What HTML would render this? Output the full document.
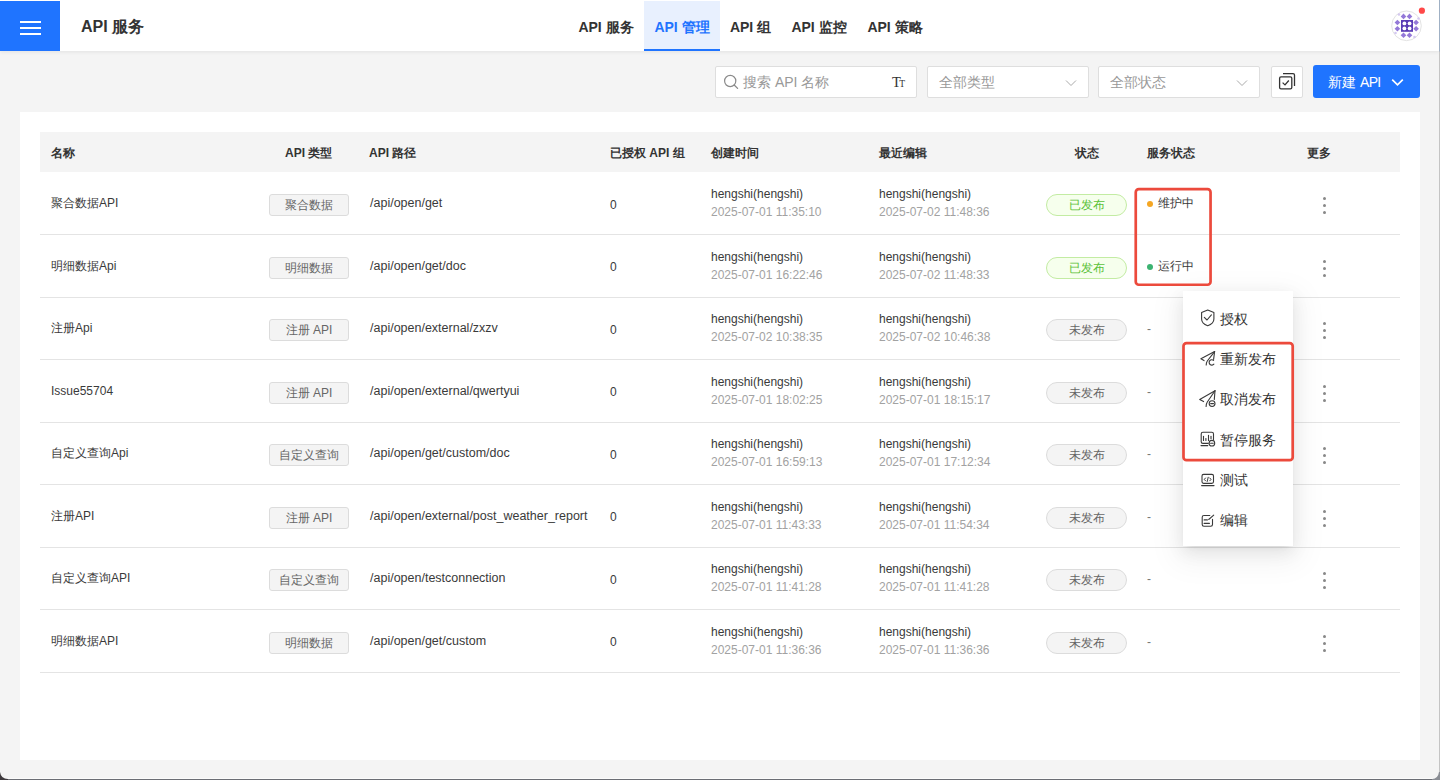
<!DOCTYPE html>
<html><head><meta charset="utf-8">
<style>
*{margin:0;padding:0;box-sizing:border-box;}
html,body{width:1440px;height:780px;overflow:hidden;}
body{position:relative;background:#f4f4f4;font-family:"Liberation Sans",sans-serif;color:#333;}
.abs{position:absolute;}
#hdr{position:absolute;left:0;top:0;width:1439px;height:51px;background:#fff;box-shadow:0 1px 4px rgba(0,0,0,0.08);}
#burger{position:absolute;left:0;top:1px;width:60px;height:50px;background:#1f74ff;}
#burger i{position:absolute;left:20px;width:21px;height:2px;background:#fff;}
#title{position:absolute;left:81px;top:17px;font-size:16px;font-weight:bold;line-height:20px;color:#333;white-space:nowrap;}
.tab{position:absolute;top:1px;height:50px;line-height:52px;font-size:14px;font-weight:bold;color:#333;white-space:nowrap;text-align:center;}
.tab.act{background:#e8f0fe;color:#1f74ff;border-bottom:2px solid #1f74ff;line-height:52px;}
.box{position:absolute;top:66px;height:32px;background:#fff;border:1px solid #dedede;border-radius:2px;}
.ph{position:absolute;font-size:14px;color:#999;white-space:nowrap;line-height:16px;}
#card{position:absolute;left:20px;top:112px;width:1400px;height:648px;background:#fff;}
#thead{position:absolute;left:40px;top:132px;width:1360px;height:40px;background:#f4f4f4;}
.th{position:absolute;top:146px;font-size:12px;font-weight:bold;line-height:14px;color:#333;white-space:nowrap;}
.row{position:absolute;left:40px;width:1360px;height:62px;}
.ln{position:absolute;left:40px;width:1360px;height:1px;background:#e4e4e4;}
.t{position:absolute;font-size:12px;line-height:14px;white-space:nowrap;color:#3a3a3a;}
.g{color:#a2a2a2;}
.tag{position:absolute;left:229px;width:80px;height:22px;top:22px;background:#f4f4f4;border:1px solid #dcdcdc;border-radius:3px;font-size:12px;line-height:20px;text-align:center;color:#666;}
.pill{position:absolute;left:1006px;width:81px;height:22px;top:22px;border-radius:11px;font-size:12px;line-height:20px;text-align:center;}
.pub{background:#f6ffed;border:1px solid #c3eca3;color:#5cc23a;}
.unpub{background:#f4f4f4;border:1px solid #dcdcdc;color:#666;}
.more{position:absolute;left:1283px;top:25px;width:3px;height:15px;}
.more i{position:absolute;left:0;width:3px;height:3px;border-radius:50%;background:#888;}
.dot{position:absolute;width:6px;height:6px;border-radius:50%;}
.redbox{position:absolute;border:3px solid #ef4739;border-radius:4px;}
#menu{position:absolute;left:1183px;top:291px;width:110px;height:255px;background:#fff;box-shadow:0 3px 6px -4px rgba(0,0,0,.12),0 6px 16px 0 rgba(0,0,0,.08),0 9px 28px 8px rgba(0,0,0,.05);}
.mi{position:absolute;left:17px;height:20px;font-size:14px;line-height:20px;color:#333;white-space:nowrap;}
.mi svg{position:absolute;left:0;top:2px;}
.mi span{position:absolute;left:20px;top:0;}
</style></head>
<body>
<div id="hdr">
  <div id="burger"><i style="top:20px"></i><i style="top:26px"></i><i style="top:32px"></i></div>
  <div id="title">API 服务</div>
  <div class="tab" style="left:568px;width:76px;">API 服务</div>
  <div class="tab act" style="left:644px;width:76px;">API 管理</div>
  <div class="tab" style="left:720px;width:61px;">API 组</div>
  <div class="tab" style="left:781px;width:76px;">API 监控</div>
  <div class="tab" style="left:857px;width:76px;">API 策略</div>
</div>

<svg class="abs" style="left:1385px;top:0px" width="45" height="48" viewBox="1385 0 45 48">
  <circle cx="1406.5" cy="25.8" r="14.8" fill="#fff" stroke="#e3e3e3" stroke-width="1"/>
  <g fill="#9479d8">
    <path d="M1403.5 13.6 l2.8 2.8 -2.8 2.8 -2.8 -2.8z"/><path d="M1409.5 13.6 l2.8 2.8 -2.8 2.8 -2.8 -2.8z"/>
    <path d="M1397.4 19.7 l2.8 2.8 -2.8 2.8 -2.8 -2.8z"/><path d="M1397.4 26 l2.8 2.8 -2.8 2.8 -2.8 -2.8z"/>
    <path d="M1416.1 19.7 l2.8 2.8 -2.8 2.8 -2.8 -2.8z"/><path d="M1416.1 26 l2.8 2.8 -2.8 2.8 -2.8 -2.8z"/>
    <path d="M1403.5 32.4 l2.8 2.8 -2.8 2.8 -2.8 -2.8z"/><path d="M1409.5 32.4 l2.8 2.8 -2.8 2.8 -2.8 -2.8z"/>
  </g>
  <g fill="#d4c8f0"><circle cx="1399" cy="14.5" r="1.3"/><circle cx="1418.5" cy="18.5" r="1.3"/><circle cx="1395.5" cy="33" r="1.3"/><circle cx="1414.5" cy="37" r="1.3"/></g>
  <rect x="1401" y="20" width="12" height="11.8" fill="#5b3db5"/>
  <g fill="#fff"><circle cx="1404.4" cy="23.4" r="1.9"/><circle cx="1409.6" cy="23.4" r="1.9"/><circle cx="1404.4" cy="28.4" r="1.9"/><circle cx="1409.6" cy="28.4" r="1.9"/></g>
  <circle cx="1407" cy="25.9" r="1.2" fill="#5b3db5"/>
  <circle cx="1421.9" cy="10.7" r="3.1" fill="#ff4848"/>
</svg>

<div class="box" style="left:715px;width:202px;">
  <svg class="abs" style="left:7px;top:7px" width="16" height="16" viewBox="0 0 16 16"><circle cx="7.2" cy="7" r="5.6" fill="none" stroke="#8a8a8a" stroke-width="1.2"/><line x1="11.2" y1="11" x2="14.6" y2="14.4" stroke="#8a8a8a" stroke-width="1.3" stroke-linecap="round"/></svg>
  <div class="ph" style="left:27px;top:7px;">搜索 API 名称</div>
  <div class="abs" style="left:176px;top:6px;font-family:'Liberation Serif',serif;color:#333;white-space:nowrap;"><span style="font-size:14.5px;">T</span><span style="font-size:9.5px;margin-left:-1.5px;">T</span></div>
</div>
<div class="box" style="left:927px;width:162px;">
  <div class="ph" style="left:11px;top:7px;">全部类型</div>
  <svg class="abs" style="left:137px;top:12px" width="12" height="8" viewBox="0 0 12 8"><polyline points="1,1.5 6,6.5 11,1.5" fill="none" stroke="#aaa" stroke-width="1"/></svg>
</div>
<div class="box" style="left:1098px;width:162px;">
  <div class="ph" style="left:11px;top:7px;">全部状态</div>
  <svg class="abs" style="left:137px;top:12px" width="12" height="8" viewBox="0 0 12 8"><polyline points="1,1.5 6,6.5 11,1.5" fill="none" stroke="#aaa" stroke-width="1"/></svg>
</div>
<div class="box" style="left:1271px;width:32px;">
  <svg class="abs" style="left:-1px;top:-1px" width="32" height="32" viewBox="1271 66 32 32" fill="none" stroke="#333" stroke-width="1.3"><path d="M1283 73.6 H1293 Q1294.5 73.6 1294.5 75.1 V86"/><rect x="1279.6" y="76.9" width="12.2" height="11.9" rx="1.4"/><polyline points="1282.6,82.6 1285,84.9 1288.8,80.5"/></svg>
</div>
<div class="abs" style="left:1313px;top:65px;width:107px;height:33px;background:#1f74ff;border-radius:3px;">
  <div class="abs" style="left:15px;top:9px;font-size:14px;line-height:16px;color:#fff;white-space:nowrap;">新建 <span style="letter-spacing:-0.6px">API</span></div>
  <svg class="abs" style="left:78px;top:13px" width="13" height="9" viewBox="0 0 13 9"><polyline points="1.2,1.6 6.5,6.8 11.8,1.6" fill="none" stroke="#fff" stroke-width="1.7"/></svg>
</div>
<div id="card"></div>
<div id="thead"></div>
<div class="th" style="left:51px;">名称</div>
<div class="th" style="left:285px;">API 类型</div>
<div class="th" style="left:369px;">API 路径</div>
<div class="th" style="left:610px;">已授权 API 组</div>
<div class="th" style="left:711px;">创建时间</div>
<div class="th" style="left:879px;">最近编辑</div>
<div class="th" style="left:1075px;">状态</div>
<div class="th" style="left:1147px;">服务状态</div>
<div class="th" style="left:1307px;">更多</div>
<div class="row" style="top:172.0px;"><div class="t" style="left:11px;top:24px;">聚合数据API</div><div class="tag">聚合数据</div><div class="t" style="left:330px;top:24px;font-size:12.5px;">/api/open/get</div><div class="t" style="left:570px;top:25.5px;">0</div><div class="t" style="left:671px;top:15px;">hengshi(hengshi)</div><div class="t g" style="left:671px;top:33px;">2025-07-01 11:35:10</div><div class="t" style="left:839px;top:15px;">hengshi(hengshi)</div><div class="t g" style="left:839px;top:33px;">2025-07-02 11:48:36</div><div class="pill pub">已发布</div><div class="dot" style="left:1107px;top:29px;background:#f5a623;"></div><div class="t" style="left:1118px;top:24px;">维护中</div><div class="more"><i style="top:0"></i><i style="top:7px"></i><i style="top:14px"></i></div></div>
<div class="row" style="top:234.5px;"><div class="t" style="left:11px;top:24px;">明细数据Api</div><div class="tag">明细数据</div><div class="t" style="left:330px;top:24px;font-size:12.5px;">/api/open/get/doc</div><div class="t" style="left:570px;top:25.5px;">0</div><div class="t" style="left:671px;top:15px;">hengshi(hengshi)</div><div class="t g" style="left:671px;top:33px;">2025-07-01 16:22:46</div><div class="t" style="left:839px;top:15px;">hengshi(hengshi)</div><div class="t g" style="left:839px;top:33px;">2025-07-02 11:48:33</div><div class="pill pub">已发布</div><div class="dot" style="left:1107px;top:29px;background:#3cb371;"></div><div class="t" style="left:1118px;top:24px;">运行中</div><div class="more"><i style="top:0"></i><i style="top:7px"></i><i style="top:14px"></i></div></div>
<div class="row" style="top:297.0px;"><div class="t" style="left:11px;top:24px;">注册Api</div><div class="tag">注册 API</div><div class="t" style="left:330px;top:24px;font-size:12.5px;">/api/open/external/zxzv</div><div class="t" style="left:570px;top:25.5px;">0</div><div class="t" style="left:671px;top:15px;">hengshi(hengshi)</div><div class="t g" style="left:671px;top:33px;">2025-07-02 10:38:35</div><div class="t" style="left:839px;top:15px;">hengshi(hengshi)</div><div class="t g" style="left:839px;top:33px;">2025-07-02 10:46:38</div><div class="pill unpub">未发布</div><div class="t" style="left:1107px;top:25px;color:#777;">-</div><div class="more"><i style="top:0"></i><i style="top:7px"></i><i style="top:14px"></i></div></div>
<div class="row" style="top:359.5px;"><div class="t" style="left:11px;top:24px;">Issue55704</div><div class="tag">注册 API</div><div class="t" style="left:330px;top:24px;font-size:12.5px;">/api/open/external/qwertyui</div><div class="t" style="left:570px;top:25.5px;">0</div><div class="t" style="left:671px;top:15px;">hengshi(hengshi)</div><div class="t g" style="left:671px;top:33px;">2025-07-01 18:02:25</div><div class="t" style="left:839px;top:15px;">hengshi(hengshi)</div><div class="t g" style="left:839px;top:33px;">2025-07-01 18:15:17</div><div class="pill unpub">未发布</div><div class="t" style="left:1107px;top:25px;color:#777;">-</div><div class="more"><i style="top:0"></i><i style="top:7px"></i><i style="top:14px"></i></div></div>
<div class="row" style="top:422.0px;"><div class="t" style="left:11px;top:24px;">自定义查询Api</div><div class="tag">自定义查询</div><div class="t" style="left:330px;top:24px;font-size:12.5px;">/api/open/get/custom/doc</div><div class="t" style="left:570px;top:25.5px;">0</div><div class="t" style="left:671px;top:15px;">hengshi(hengshi)</div><div class="t g" style="left:671px;top:33px;">2025-07-01 16:59:13</div><div class="t" style="left:839px;top:15px;">hengshi(hengshi)</div><div class="t g" style="left:839px;top:33px;">2025-07-01 17:12:34</div><div class="pill unpub">未发布</div><div class="t" style="left:1107px;top:25px;color:#777;">-</div><div class="more"><i style="top:0"></i><i style="top:7px"></i><i style="top:14px"></i></div></div>
<div class="row" style="top:484.5px;"><div class="t" style="left:11px;top:24px;">注册API</div><div class="tag">注册 API</div><div class="t" style="left:330px;top:24px;font-size:12.5px;">/api/open/external/post_weather_report</div><div class="t" style="left:570px;top:25.5px;">0</div><div class="t" style="left:671px;top:15px;">hengshi(hengshi)</div><div class="t g" style="left:671px;top:33px;">2025-07-01 11:43:33</div><div class="t" style="left:839px;top:15px;">hengshi(hengshi)</div><div class="t g" style="left:839px;top:33px;">2025-07-01 11:54:34</div><div class="pill unpub">未发布</div><div class="t" style="left:1107px;top:25px;color:#777;">-</div><div class="more"><i style="top:0"></i><i style="top:7px"></i><i style="top:14px"></i></div></div>
<div class="row" style="top:547.0px;"><div class="t" style="left:11px;top:24px;">自定义查询API</div><div class="tag">自定义查询</div><div class="t" style="left:330px;top:24px;font-size:12.5px;">/api/open/testconnection</div><div class="t" style="left:570px;top:25.5px;">0</div><div class="t" style="left:671px;top:15px;">hengshi(hengshi)</div><div class="t g" style="left:671px;top:33px;">2025-07-01 11:41:28</div><div class="t" style="left:839px;top:15px;">hengshi(hengshi)</div><div class="t g" style="left:839px;top:33px;">2025-07-01 11:41:28</div><div class="pill unpub">未发布</div><div class="t" style="left:1107px;top:25px;color:#777;">-</div><div class="more"><i style="top:0"></i><i style="top:7px"></i><i style="top:14px"></i></div></div>
<div class="row" style="top:609.5px;"><div class="t" style="left:11px;top:24px;">明细数据API</div><div class="tag">明细数据</div><div class="t" style="left:330px;top:24px;font-size:12.5px;">/api/open/get/custom</div><div class="t" style="left:570px;top:25.5px;">0</div><div class="t" style="left:671px;top:15px;">hengshi(hengshi)</div><div class="t g" style="left:671px;top:33px;">2025-07-01 11:36:36</div><div class="t" style="left:839px;top:15px;">hengshi(hengshi)</div><div class="t g" style="left:839px;top:33px;">2025-07-01 11:36:36</div><div class="pill unpub">未发布</div><div class="t" style="left:1107px;top:25px;color:#777;">-</div><div class="more"><i style="top:0"></i><i style="top:7px"></i><i style="top:14px"></i></div></div>

<div class="ln" style="top:234px"></div><div class="ln" style="top:297px"></div><div class="ln" style="top:359px"></div><div class="ln" style="top:422px"></div><div class="ln" style="top:484px"></div><div class="ln" style="top:547px"></div><div class="ln" style="top:609px"></div><div class="ln" style="top:672px"></div><svg class="abs" style="left:1130px;top:180px;z-index:5" width="170" height="290" viewBox="1130 180 170 290" fill="none" stroke="#ec4a3c" stroke-width="2.7"><rect x="1135.75" y="189.15" width="74.8" height="95.6" rx="3"/><rect x="1183.5" y="343.05" width="109.2" height="117.1" rx="3"/></svg>
<div id="menu">
  <div class="mi" style="top:18px;"><span>授权</span></div>
  <div class="mi" style="top:58px;"><span>重新发布</span></div>
  <div class="mi" style="top:98px;"><span>取消发布</span></div>
  <div class="mi" style="top:139px;"><span>暂停服务</span></div>
  <div class="mi" style="top:179px;"><span>测试</span></div>
  <div class="mi" style="top:219px;"><span>编辑</span></div>
</div>

<svg class="abs" style="left:1190px;top:300px" width="30" height="240" viewBox="1190 300 30 240" fill="none" stroke="#3a3a3a" stroke-width="1.1" stroke-linecap="round" stroke-linejoin="round">
  <path d="M1207.7 310 L1201.6 312.6 V319 Q1201.6 323.6 1207.7 325.7 Q1213.9 323.6 1213.9 319 V312.6 Z"/>
  <polyline points="1204.3,317.4 1207,320 1211.4,314.8"/>
  <path d="M1214.6 351.6 L1200.9 358.8 L1204 360.6"/>
  <path d="M1214.6 351.6 L1207.3 361 Q1206.2 362.6 1206.2 365"/>
  <path d="M1214.6 351.6 L1213.6 359.4"/>
  <path d="M1213.9 364.2 A2.7 2.7 0 1 1 1213.6 360.4"/>
  <path d="M1215 390.8 L1199.7 399.6 L1203.6 401.6"/>
  <path d="M1215 390.8 L1207.3 402 Q1206.1 403.8 1206.1 406.5"/>
  <path d="M1215 390.8 L1214.3 399.4"/>
  <circle cx="1212.1" cy="403.6" r="2.9"/>
  <line x1="1210.7" y1="403.6" x2="1213.5" y2="403.6"/>
  <path d="M1208.2 443.4 H1202.9 Q1201.2 443.4 1201.2 441.7 V434 Q1201.2 432.3 1202.9 432.3 H1211.8 Q1213.5 432.3 1213.5 434 V439.6"/>
  <line x1="1203.5" y1="436.4" x2="1203.5" y2="440.5"/>
  <line x1="1205.9" y1="438.5" x2="1205.9" y2="440.5"/>
  <line x1="1208.5" y1="435.4" x2="1208.5" y2="440.5"/>
  <line x1="1211" y1="436.4" x2="1211" y2="438.8"/>
  <line x1="1201" y1="445.6" x2="1207.8" y2="445.6"/>
  <circle cx="1211.9" cy="443.2" r="2.8"/>
  <line x1="1210.6" y1="443.2" x2="1213.2" y2="443.2"/>
  <rect x="1202" y="474.4" width="11.5" height="9" rx="1.6"/>
  <line x1="1201.6" y1="485.6" x2="1214" y2="485.6"/>
  <polyline points="1205.5,478 1204.3,479.4 1205.5,480.8" stroke-width="1"/>
  <polyline points="1209.8,478 1211,479.4 1209.8,480.8" stroke-width="1"/>
  <line x1="1208.2" y1="477.3" x2="1207.2" y2="481.5" stroke-width="1"/>
  <path d="M1209.8 515.5 H1203.9 Q1202.2 515.5 1202.2 517.2 V524.6 Q1202.2 526.3 1203.9 526.3 H1210.8 Q1212.5 526.3 1212.5 524.6 V519.2"/>
  <line x1="1204.1" y1="519.9" x2="1207.4" y2="519.9"/>
  <line x1="1204.1" y1="523.4" x2="1209.4" y2="523.4"/>
  <line x1="1208.7" y1="519.5" x2="1213.7" y2="515.2"/>
</svg>


<div class="abs" style="left:1439px;top:0;width:1px;height:780px;background:linear-gradient(#9fb0c4 0,#9fb0c4 51px,#c4c4c4 52px,#c4c4c4);"></div>
<div class="abs" style="left:0;top:778px;width:1440px;height:1px;background:#fbfbfb;"></div>
<div class="abs" style="left:0;top:779px;width:1440px;height:1px;background:#6b6d74;"></div>
<svg class="abs" style="left:0;top:770px" width="8" height="10" viewBox="0 0 8 10"><path d="M0 0 V10 H8 V9 Q1 9 0 2z" fill="#3e3a3e"/></svg>
<svg class="abs" style="left:1432px;top:772px" width="8" height="8" viewBox="0 0 8 8"><path d="M8 0 V8 H0 V7 Q6 7 7 0z" fill="#8a8d94"/></svg>
</body></html>
